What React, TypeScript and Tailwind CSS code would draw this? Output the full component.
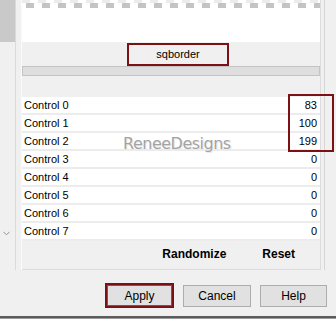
import { ChevronDown } from "lucide-react";

const rows = [
  ["Control 0", "83"],
  ["Control 1", "100"],
  ["Control 2", "199"],
  ["Control 3", "0"],
  ["Control 4", "0"],
  ["Control 5", "0"],
  ["Control 6", "0"],
  ["Control 7", "0"],
];

const App = () => {
  return (
    <div className="relative w-[336px] h-[319px] overflow-hidden bg-[#f0f0f0] font-['Liberation_Sans',Arial,sans-serif] text-black flex flex-col">
      <div className="flex h-[270px]">
        <div className="w-[16px] flex flex-col border-r border-[#dadada]">
          <div className="h-[42px] bg-[#c9c9c9]" />
          <div className="flex-1 flex items-end justify-start pl-[1px] pb-[31px]">
            <ChevronDown size={11} strokeWidth={2} className="text-[#8a8a8a]" />
          </div>
        </div>
        <div className="w-[6px] border-r border-[#fbfbfb]" />
        <div className="w-[299px] flex flex-col border-r border-b border-[#dcdcdc]">
          <div className="h-[8px] flex flex-col">
            <div className="h-[3px] bg-[repeating-linear-gradient(90deg,#ececec_0_8px,#ffffff_8px_16px)]" />
            <div className="h-[5px] bg-[repeating-linear-gradient(90deg,#ffffff_0_4px,#c4c4c4_4px_12px,#ffffff_12px_16px)]" />
          </div>
          <div className="h-[34px] bg-white" />
          <div className="h-[1px]" />
          <div className="h-[23px] flex">
            <div className="ml-[105px] w-[102px] h-[23px] border-2 border-[#7b1114] bg-[#f0f0f0] flex items-center justify-center text-[11px]">
              sqborder
            </div>
          </div>
          <div className="h-[10px] bg-[#dedede] border border-[#c4c4c4]" />
          <div className="h-[21px]" />
          <div className="flex flex-col">
            {rows.map(([label, value]) => (
              <div key={label} className="h-[18px] flex flex-col">
                <div className="h-[16px] bg-white flex items-center justify-between pl-[2px] pr-[3px] text-[11px]">
                  <span>{label}</span>
                  <span>{value}</span>
                </div>
                <div className="h-[2px] bg-[#ececec]" />
              </div>
            ))}
          </div>
          <div className="flex-1 flex items-center justify-end gap-[36px] pr-[25px] pb-[2px] text-[12px] font-bold">
            <span>Randomize</span>
            <span>Reset</span>
          </div>
        </div>
        <div className="flex-1 flex justify-start pl-[3px]">
          <div className="w-[1px] bg-[#d6d6d6]" />
        </div>
      </div>

      <div className="flex-1 flex items-start justify-end gap-[9px] pr-[9px] pt-[13px] text-[12px]">
        <div className="w-[69px] h-[25px] border-2 border-[#7b1114] flex">
          <div className="flex-1 bg-[#e1e1e1] border border-[#0078d7] flex items-center justify-center">
            Apply
          </div>
        </div>
        <div className="mt-[2px] w-[68px] h-[22px] bg-[#e1e1e1] border border-[#adadad] flex items-center justify-center">
          Cancel
        </div>
        <div className="mt-[2px] w-[67px] h-[22px] bg-[#e1e1e1] border border-[#adadad] flex items-center justify-center">
          Help
        </div>
      </div>
      <div className="h-[2px] bg-[#5c5c5c]" />
      <div className="h-[1px] bg-[#9a9a9a]" />

      <div className="absolute left-[288px] top-[94px] w-[46px] h-[58px] border-2 border-[#7b1114]" />
      <div className="absolute left-[123px] top-[132px] text-[16px] text-[#a3a3a3] [text-shadow:0_0_1px_#ffffff,1px_1px_0_#e8e8e8] font-['DejaVu_Sans',sans-serif] tracking-[-0.5px]">
        ReneeDesigns
      </div>
    </div>
  );
};

export default App;
